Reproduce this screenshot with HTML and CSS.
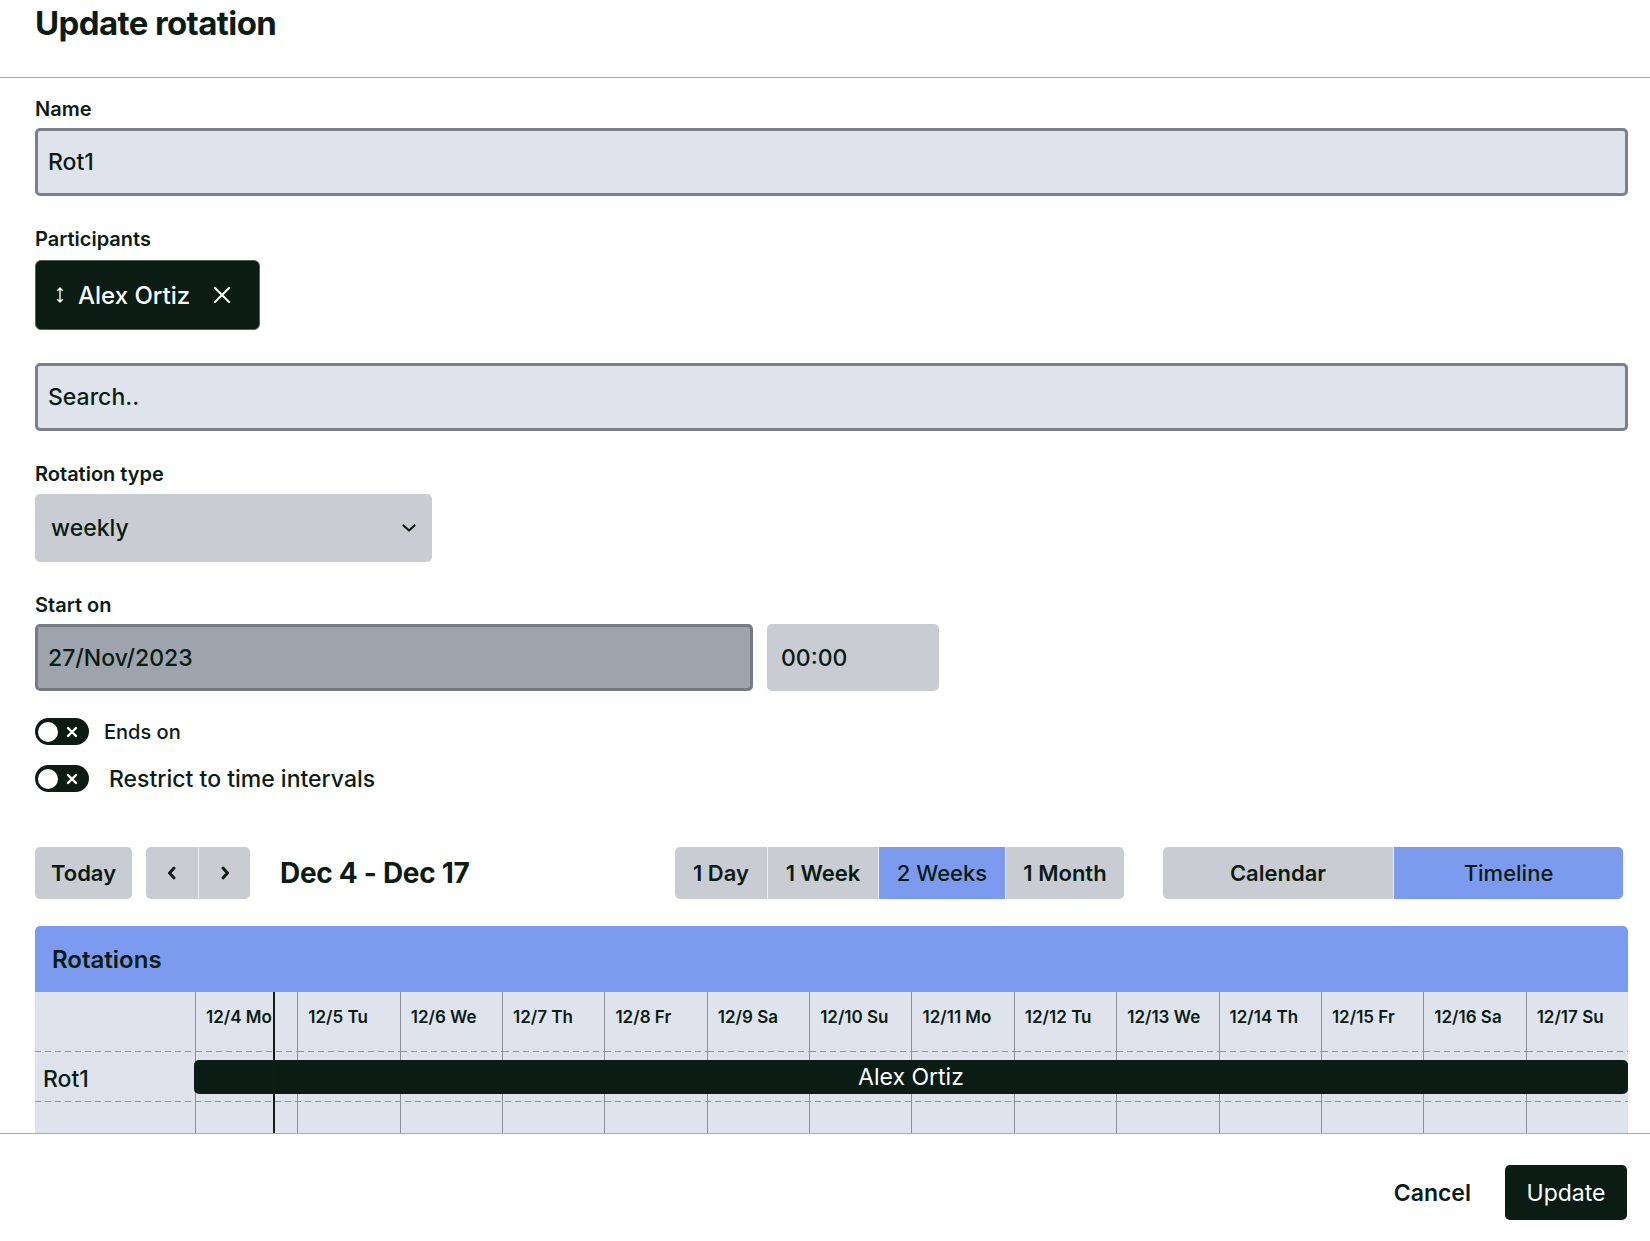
FILE: index.html
```html
<!DOCTYPE html>
<html lang="en">
<head>
<meta charset="utf-8">
<title>Update rotation</title>
<link rel="stylesheet" href="styles.css">
</head>
<body>
<div class="modal">
  <header class="modal-header">
    <h1 class="modal-title">Update rotation</h1>
  </header>

  <div class="modal-body">
    <div class="field">
      <label class="field-label">Name</label>
      <input class="text-input" type="text" value="Rot1">
    </div>

    <div class="field">
      <label class="field-label">Participants</label>
      <div class="chips">
        <div class="chip">
          <svg class="chip-handle" viewBox="0 0 10 18" width="10" height="18"><path d="M5 2v14M2.5 4.5 5 2l2.5 2.5M2.5 13.5 5 16l2.5-2.5" fill="none" stroke="#fff" stroke-width="1.4" stroke-linecap="round" stroke-linejoin="round"/></svg>
          <span class="chip-name">Alex Ortiz</span>
          <svg class="chip-remove" viewBox="0 0 18 18" width="18" height="18"><path d="M2 2l14 14M16 2 2 16" fill="none" stroke="#fff" stroke-width="2" stroke-linecap="round"/></svg>
        </div>
      </div>
      <input class="text-input search" type="text" placeholder="Search..">
    </div>

    <div class="field">
      <label class="field-label">Rotation type</label>
      <div class="select">
        <span>weekly</span>
        <svg viewBox="0 0 14 8" width="14" height="8"><path d="M1.5 1.5 7 6.5l5.5-5" fill="none" stroke="#0b1c14" stroke-width="2.2" stroke-linecap="round" stroke-linejoin="round"/></svg>
      </div>
    </div>

    <div class="field field-last">
      <label class="field-label">Start on</label>
      <div class="datetime">
        <input class="text-input date-input" type="text" value="27/Nov/2023">
        <div class="time-input">00:00</div>
      </div>
    </div>

    <div class="toggle-row">
      <div class="toggle">
        <span class="knob"></span>
        <svg class="toggle-x" viewBox="0 0 12 12" width="12" height="12"><path d="M2 2l8 8M10 2 2 10" fill="none" stroke="#fff" stroke-width="2.4" stroke-linecap="round"/></svg>
      </div>
      <span class="toggle-label-sm">Ends on</span>
    </div>
    <div class="toggle-row">
      <div class="toggle">
        <span class="knob"></span>
        <svg class="toggle-x" viewBox="0 0 12 12" width="12" height="12"><path d="M2 2l8 8M10 2 2 10" fill="none" stroke="#fff" stroke-width="2.4" stroke-linecap="round"/></svg>
      </div>
      <span class="toggle-label">Restrict to time intervals</span>
    </div>

    <div class="toolbar">
      <div class="toolbar-left">
        <button class="btn btn-today">Today</button>
        <div class="btn-group nav-group">
          <button class="btn btn-icon"><svg viewBox="0 0 10 14" width="10" height="14"><path d="M7 2 2.5 7 7 12" fill="none" stroke="#0b1c14" stroke-width="3" stroke-linecap="round" stroke-linejoin="round"/></svg></button>
          <button class="btn btn-icon"><svg viewBox="0 0 10 14" width="10" height="14"><path d="M3 2l4.5 5L3 12" fill="none" stroke="#0b1c14" stroke-width="3" stroke-linecap="round" stroke-linejoin="round"/></svg></button>
        </div>
        <span class="range-title">Dec 4 - Dec 17</span>
      </div>
      <div class="btn-group view-group">
        <button class="btn w-day">1 Day</button>
        <button class="btn w-week">1 Week</button>
        <button class="btn w-2weeks active">2 Weeks</button>
        <button class="btn w-month">1 Month</button>
      </div>
      <div class="btn-group mode-group">
        <button class="btn btn-mode">Calendar</button>
        <button class="btn btn-mode active">Timeline</button>
      </div>
    </div>

    <div class="calendar">
      <div class="cal-head">Rotations</div>
      <div class="timeline">
        <div class="corner"></div>
        <div class="day">12/4 Mo</div>
        <div class="day">12/5 Tu</div>
        <div class="day">12/6 We</div>
        <div class="day">12/7 Th</div>
        <div class="day">12/8 Fr</div>
        <div class="day">12/9 Sa</div>
        <div class="day">12/10 Su</div>
        <div class="day">12/11 Mo</div>
        <div class="day">12/12 Tu</div>
        <div class="day">12/13 We</div>
        <div class="day">12/14 Th</div>
        <div class="day">12/15 Fr</div>
        <div class="day">12/16 Sa</div>
        <div class="day">12/17 Su</div>

        <div class="row-label">Rot1</div>
        <div class="track track-dashed">
          <div class="bar">Alex Ortiz</div>
        </div>

        <div class="empty-label"></div>
        <div class="track"></div>

        <div class="now-line"></div>
      </div>
    </div>
  </div>

  <footer class="modal-footer">
    <button class="btn-cancel">Cancel</button>
    <button class="btn-primary">Update</button>
  </footer>
</div>
</body>
</html>
```

FILE: styles.css
```css
* {
  box-sizing: border-box;
}

html, body {
  margin: 0;
  padding: 0;
  background: #ffffff;
}

body {
  font-family: Inter, "Noto Sans", "Liberation Sans", sans-serif;
  color: #0b1c14;
}

button {
  font-family: inherit;
  color: inherit;
  cursor: pointer;
}

.modal {
  width: 1650px;
  height: 1241px;
  display: flex;
  flex-direction: column;
  overflow: hidden;
}

/* Header */
.modal-header {
  flex: none;
  height: 78px;
  border-bottom: 1px solid #a4a8af;
  padding: 3px 22px 0 35px;
}

.modal-title {
  margin: 0;
  font-size: 33px;
  line-height: 40px;
  font-weight: 700;
  letter-spacing: -0.6px;
}

/* Body */
.modal-body {
  flex: none;
  height: 1055px;
  overflow: hidden;
  padding: 18px 22px 0 35px;
}

.field {
  margin-bottom: 30px;
}

.field-last {
  margin-bottom: 27px;
}

.field-label {
  display: block;
  font-size: 20px;
  line-height: 26px;
  font-weight: 600;
  margin-bottom: 6px;
}

.text-input {
  display: block;
  width: 100%;
  height: 68px;
  margin: 0;
  border: 3px solid #7b808b;
  border-radius: 5px;
  background: #dfe4ec;
  padding: 0 10px;
  font-family: inherit;
  font-size: 23px;
  font-weight: 500;
  color: #0b1c14;
  outline: none;
}

.text-input::placeholder {
  color: #0b1c14;
  opacity: 1;
}

.search {
  margin-top: 33px;
}

/* Participant chip */
.chips {
  display: flex;
  margin-top: 8px;
}

.chip {
  width: 225px;
  height: 70px;
  display: flex;
  align-items: center;
  padding-left: 19px;
  background: #0a1c13;
  border: 1px solid #56605b;
  border-radius: 6px;
  color: #ffffff;
  font-size: 24px;
  font-weight: 500;
}

.chip-handle {
  flex: none;
  margin-right: 13px;
}

.chip-remove {
  flex: none;
  margin-left: 23px;
}

/* Select */
.select {
  width: 397px;
  height: 68px;
  margin-top: 7px;
  display: flex;
  align-items: center;
  justify-content: space-between;
  padding: 0 16px 0 16px;
  background: #c9cdd3;
  border-radius: 5px;
  font-size: 23px;
  font-weight: 500;
}

/* Date + time */
.datetime {
  display: flex;
  gap: 14px;
}

.date-input {
  width: 718px;
  height: 67px;
  background: #9ea4ae;
  border-color: #767b86;
}

.time-input {
  width: 172px;
  height: 67px;
  display: flex;
  align-items: center;
  padding-left: 14px;
  background: #c9cdd3;
  border-radius: 5px;
  font-size: 23px;
  font-weight: 500;
}

/* Toggles */
.toggle-row {
  display: flex;
  align-items: center;
  height: 27px;
}

.toggle-row + .toggle-row {
  margin-top: 20px;
}

.toggle {
  flex: none;
  width: 54px;
  height: 27px;
  border-radius: 14px;
  background: #0a1c13;
  display: flex;
  align-items: center;
  padding: 0 3px;
}

.knob {
  width: 20px;
  height: 20px;
  border-radius: 50%;
  background: #ffffff;
}

.toggle-x {
  margin-left: 8px;
}

.toggle-label-sm {
  margin-left: 15px;
  font-size: 20px;
  font-weight: 500;
}

.toggle-label {
  margin-left: 20px;
  font-size: 23px;
  font-weight: 500;
}

/* Toolbar */
.toolbar {
  display: flex;
  align-items: center;
  height: 52px;
  margin-top: 55px;
}

.toolbar-left {
  flex: none;
  width: 640px;
  display: flex;
  align-items: center;
}

.btn {
  height: 52px;
  border: none;
  margin: 0;
  background: #c9cdd3;
  font-size: 22px;
  font-weight: 600;
  padding: 0 16px;
  display: flex;
  align-items: center;
  justify-content: center;
}

.btn-today {
  width: 97px;
  border-radius: 5px;
}

.btn-group {
  display: flex;
}

.btn-group .btn + .btn {
  border-left: 1px solid #eceef2;
}

.btn-group .btn:first-child {
  border-radius: 5px 0 0 5px;
}

.btn-group .btn:last-child {
  border-radius: 0 5px 5px 0;
}

.nav-group {
  margin-left: 14px;
}

.btn-icon {
  width: 52px;
  padding: 0;
}

.range-title {
  margin-left: 30px;
  font-size: 28px;
  font-weight: 700;
  letter-spacing: -0.3px;
}

.w-day { width: 92px; }
.w-week { width: 111px; }
.w-2weeks { width: 127px; }
.w-month { width: 119px; }

.mode-group {
  margin-left: 39px;
}

.btn-mode {
  width: 230px;
}

.btn.active {
  background: #7c9bee;
  font-weight: 500;
}

/* Calendar */
.calendar {
  margin-top: 27px;
}

.cal-head {
  height: 66px;
  display: flex;
  align-items: center;
  padding-left: 17px;
  background: #7c9bee;
  border-radius: 5px 5px 0 0;
  font-size: 24px;
  font-weight: 600;
}

.timeline {
  position: relative;
  display: grid;
  grid-template-columns: 160px repeat(14, 1fr);
  grid-template-rows: 60px 50px 60px;
  background: #dfe4ec;
}

.corner,
.day,
.row-label {
  background-image: linear-gradient(to right, #8f959f 60%, transparent 60%);
  background-size: 10px 1px;
  background-repeat: repeat-x;
  background-position: left bottom;
}

.day {
  border-left: 1px solid #8a8f98;
  padding: 14px 0 0 10px;
  font-size: 17px;
  line-height: 22px;
  font-weight: 600;
  white-space: nowrap;
  overflow: hidden;
}

.row-label {
  padding: 13px 0 0 8px;
  font-size: 23px;
  line-height: 28px;
  font-weight: 500;
}

.track {
  grid-column: 2 / -1;
  background-image: repeating-linear-gradient(to right, #8a8f98 0, #8a8f98 1px, transparent 1px, transparent calc(100% / 14));
}

.track-dashed {
  background-image:
    linear-gradient(to right, #8f959f 60%, transparent 60%),
    repeating-linear-gradient(to right, #8a8f98 0, #8a8f98 1px, transparent 1px, transparent calc(100% / 14));
  background-size: 10px 1px, 100% 100%;
  background-repeat: repeat-x, no-repeat;
  background-position: left bottom, left top;
  padding-top: 8px;
}

.bar {
  height: 34px;
  margin-left: -1px;
  background: #0a1c13;
  border-radius: 5px;
  color: #ffffff;
  text-align: center;
  font-size: 23px;
  line-height: 34px;
  font-weight: 400;
}

.now-line {
  position: absolute;
  left: 238px;
  top: 0;
  bottom: 0;
  width: 2px;
  background: #111a15;
}

/* Footer */
.modal-footer {
  flex: 1;
  border-top: 1px solid #a4a8af;
  display: flex;
  justify-content: flex-end;
  align-items: flex-start;
  gap: 12px;
  padding: 31px 23px 0 0;
}

.btn-cancel {
  height: 55px;
  padding: 0 22px;
  border: none;
  background: none;
  font-size: 23px;
  font-weight: 600;
}

.btn-primary {
  width: 122px;
  height: 55px;
  border: none;
  border-radius: 5px;
  background: #0a1c13;
  color: #ffffff;
  font-size: 23px;
  font-weight: 400;
}
```
